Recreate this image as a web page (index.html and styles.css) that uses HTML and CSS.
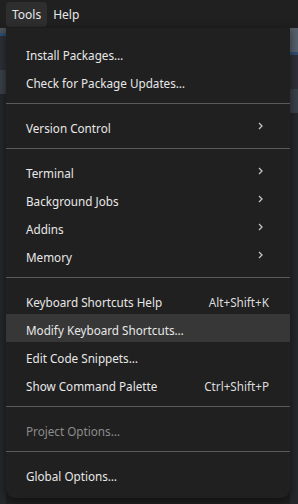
FILE: index.html
```html
<html>
<head>
    <meta charset="UTF-8">
    <title>Tools menu</title>
    <link rel="stylesheet" href="styles.css">
</head>
<body>
<div class="menubar">
    <span class="top-item active">Tools</span>
    <span class="top-item">Help</span>
</div>
<div class="workspace">
    <div class="side left">
        <div class="band gray"></div>
        <div class="band blue"></div>
        <div class="band dark"></div>
        <div class="band mid"></div>
        <div class="band deep"></div>
    </div>
    <div class="gap"></div>
    <div class="side right">
        <div class="band gray tall"></div>
        <div class="band blue"></div>
        <div class="band dark"></div>
        <div class="band mid"></div>
        <div class="band deep"></div>
    </div>
</div>

<div class="dropdown">
    <div class="row">Install Packages…</div>
    <div class="row">Check for Package Updates…</div>
    <div class="sep"></div>
    <div class="row">Version Control <svg class="chev" width="5" height="8" viewBox="0 0 5 8"><polyline points="1,1 4,4 1,7" fill="none" stroke="#c4c4c4" stroke-width="1.3"/></svg></div>
    <div class="sep"></div>
    <div class="row">Terminal <svg class="chev" width="5" height="8" viewBox="0 0 5 8"><polyline points="1,1 4,4 1,7" fill="none" stroke="#c4c4c4" stroke-width="1.3"/></svg></div>
    <div class="row">Background Jobs <svg class="chev" width="5" height="8" viewBox="0 0 5 8"><polyline points="1,1 4,4 1,7" fill="none" stroke="#c4c4c4" stroke-width="1.3"/></svg></div>
    <div class="row">Addins <svg class="chev" width="5" height="8" viewBox="0 0 5 8"><polyline points="1,1 4,4 1,7" fill="none" stroke="#c4c4c4" stroke-width="1.3"/></svg></div>
    <div class="row">Memory <svg class="chev" width="5" height="8" viewBox="0 0 5 8"><polyline points="1,1 4,4 1,7" fill="none" stroke="#c4c4c4" stroke-width="1.3"/></svg></div>
    <div class="sep"></div>
    <div class="row">Keyboard Shortcuts Help <span class="key">Alt+Shift+K</span></div>
    <div class="row hover">Modify Keyboard Shortcuts…</div>
    <div class="row">Edit Code Snippets…</div>
    <div class="row">Show Command Palette <span class="key">Ctrl+Shift+P</span></div>
    <div class="sep"></div>
    <div class="row disabled">Project Options…</div>
    <div class="sep"></div>
    <div class="row">Global Options…</div>
</div>
</body>
</html>
```

FILE: styles.css
```css
*{
    padding: 0;
    margin: 0;
    box-sizing: border-box;
}
body{
    width: 298px;
    height: 504px;
    overflow: hidden;
    background-color: #1c1c1c;
    font-family: "Noto Sans", "Liberation Sans", sans-serif;
    font-size: 11.7px;
    color: #e8e8e8;
}
.menubar{
    height: 28px;
    display: flex;
    align-items: center;
    padding-left: 6px;
    background-color: #202020;
}
.top-item{
    height: 25px;
    line-height: 25px;
    padding: 0 6px;
    border-radius: 4px;
    font-size: 12px;
}
.top-item.active{
    background-color: #2e2e2e;
}
.workspace{
    display: flex;
    height: 476px;
}
.side{
    width: 8px;
    display: flex;
    flex-direction: column;
}
.side.left{
    width: 6px;
}
.gap{
    flex: 1;
    background-color: #1f1f1f;
}
.band.gray{ height: 5px; background-color: #4b525b; }
.band.gray.tall{ height: 24px; background-color: #56606b; }
.band.blue{ height: 3px; background-color: #2f4d70; }
.band.dark{ height: 34px; background-color: #2c3036; }
.band.mid{ height: 24px; background-color: #3a4048; }
.band.deep{ flex: 1; background-color: #24272b; }

/* the open Tools menu lies over the window */
.dropdown{
    position: absolute;
    top: 28px;
    left: 6px;
    width: 284px;
    height: 470px;
    padding: 11px 0 10px;
    background-color: #202020;
    border-radius: 0 0 9px 9px;
    box-shadow: 0 2px 8px rgba(0, 0, 0, 0.55);
}
.row{
    height: 28px;
    display: flex;
    align-items: center;
    justify-content: space-between;
    padding: 4px 21px 0 20px;
}
.row .chev{
    margin-right: 6px;
    margin-top: -4px;
}
.row.hover{
    background-color: #373737;
}
.row.disabled{
    color: #8c8c8c;
}
.key{
    color: #dcdcdc;
}
.sep{
    height: 17px;
    padding-top: 8px;
}
.sep::after{
    content: "";
    display: block;
    height: 1px;
    background-color: #5a5a5a;
}
```
